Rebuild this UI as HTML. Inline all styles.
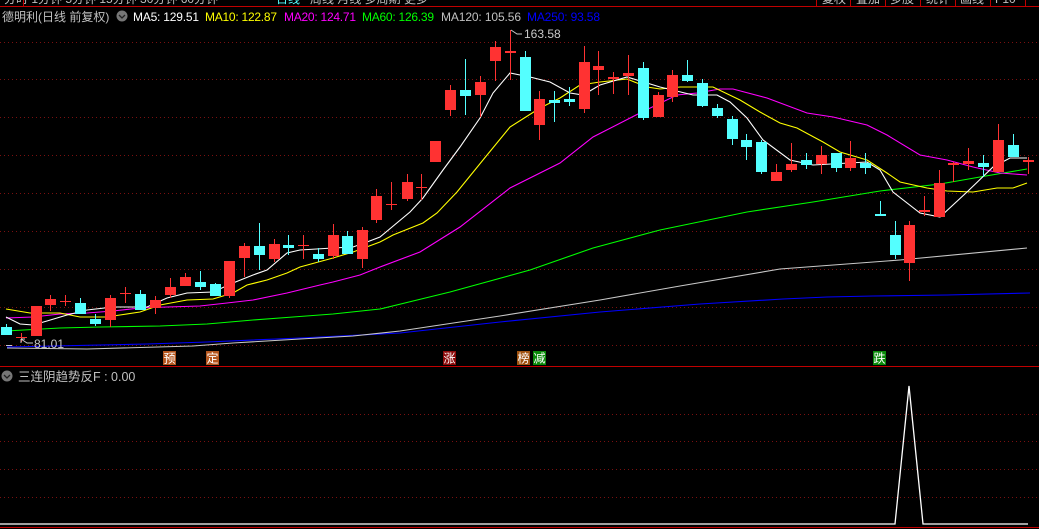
<!DOCTYPE html>
<html><head><meta charset="utf-8"><style>
html,body{margin:0;padding:0;background:#000;width:1039px;height:529px;overflow:hidden}
svg{display:block}
text{font-family:"Liberation Sans","Noto Sans CJK SC",sans-serif}
</style></head><body>
<svg width="1039" height="529" viewBox="0 0 1039 529" xmlns="http://www.w3.org/2000/svg" shape-rendering="crispEdges">
<rect width="1039" height="529" fill="#000"/>
<g fill="#c0c0c0" font-size="12">
<text x="4" y="3">分时 1分钟 5分钟 15分钟 30分钟 60分钟</text>
<text x="276" y="3" fill="#54ffff">日线</text>
<text x="310" y="3">周线 月线 多周期 更多</text>
<text x="822" y="3">复权</text><text x="856" y="3">叠加</text><text x="890" y="3">多股</text><text x="926" y="3">统计</text><text x="960" y="3">画线</text><text x="995" y="3">F10</text>
</g>
<line x1="0" y1="6.5" x2="1039" y2="6.5" stroke="#c00000"/>
<g stroke="#c00000"><line x1="23.5" y1="0" x2="23.5" y2="7"/><line x1="816.5" y1="0" x2="816.5" y2="7"/><line x1="850.5" y1="0" x2="850.5" y2="7"/><line x1="885.5" y1="0" x2="885.5" y2="7"/><line x1="920.5" y1="0" x2="920.5" y2="7"/><line x1="955.5" y1="0" x2="955.5" y2="7"/><line x1="990.5" y1="0" x2="990.5" y2="7"/><line x1="1025.5" y1="0" x2="1025.5" y2="7"/></g>
<g font-size="12">
<text x="2" y="21" fill="#c0c0c0">德明利(日线 前复权)</text>
<circle cx="122" cy="16" r="5.5" fill="#777" shape-rendering="auto"/><path d="M119 15l3 3 3-3" stroke="#222" fill="none" stroke-width="1.3" shape-rendering="auto"/>
<text x="133" y="21" fill="#fff" textLength="66">MA5: 129.51</text>
<text x="205" y="21" fill="#ffff00" textLength="72">MA10: 122.87</text>
<text x="284" y="21" fill="#ff00ff" textLength="72">MA20: 124.71</text>
<text x="362" y="21" fill="#00ff00" textLength="72">MA60: 126.39</text>
<text x="441" y="21" fill="#c0c0c0" textLength="80">MA120: 105.56</text>
<text x="527" y="21" fill="#0000ff" textLength="73">MA250: 93.58</text>
</g>
<g stroke="#7a1010" stroke-dasharray="1 3">
<line x1="0" y1="42.5" x2="1039" y2="42.5"/><line x1="0" y1="79.5" x2="1039" y2="79.5"/><line x1="0" y1="117.5" x2="1039" y2="117.5"/><line x1="0" y1="155.5" x2="1039" y2="155.5"/><line x1="0" y1="193.5" x2="1039" y2="193.5"/><line x1="0" y1="231.5" x2="1039" y2="231.5"/><line x1="0" y1="269.5" x2="1039" y2="269.5"/><line x1="0" y1="307.5" x2="1039" y2="307.5"/><line x1="0" y1="345.5" x2="1039" y2="345.5"/>
<line x1="0" y1="414.5" x2="1039" y2="414.5"/><line x1="0" y1="441.5" x2="1039" y2="441.5"/><line x1="0" y1="469.5" x2="1039" y2="469.5"/><line x1="0" y1="497.5" x2="1039" y2="497.5"/>
</g>
<g fill="none" stroke-width="1.1" shape-rendering="auto">
<polyline stroke="#0000ff" points="7,347 147,344 207,342 300,338 400,333 500,322 600,312 700,304 783,299 827,297 873,296 947,295 1030,293"/>
<polyline stroke="#c8c8c8" points="7,348 87,349 193,346 233,343 300,339 353,336 400,331 500,316 600,300 680,286 780,269 900,260 1027,248"/>
<polyline stroke="#00ff00" points="6,331 60,328 100,327 160,326 207,324 253,320 293,317 333,314 380,309 450,292 530,270 593,248 660,230 747,212 813,202 880,191 940,184 980,177 1027,169"/>
<polyline stroke="#ff00ff" points="6,318 33,317 60,314 87,313 113,311 140,308 167,307 200,306 227,303 253,300 287,293 320,285 333,282 360,275 380,267 420,252 460,227 510,188 560,163 593,137 640,113 677,95 697,93 720,89 733,89 767,98 807,113 833,117 867,125 887,135 920,155 947,160 973,167 1000,173 1027,175"/>
<polyline stroke="#ffff00" points="6,309 30,313 60,313 80,317 107,317 120,315 140,312 160,305 187,300 213,299 233,293 247,285 267,280 287,273 300,267 333,258 353,252 380,242 393,235 423,223 437,213 457,192 483,160 510,127 540,108 560,98 580,85 600,82 627,79 647,87 660,89 680,87 713,87 740,100 760,112 780,123 797,128 823,142 840,152 867,160 887,173 900,182 927,188 947,191 973,192 997,188 1013,188 1027,183"/>
<polyline stroke="#ffffff" points="6,317 20,324 33,325 47,321 67,315 87,310 113,307 147,307 167,298 187,293 213,292 233,283 253,275 267,270 287,253 300,250 333,248 353,247 367,242 380,237 410,212 423,198 443,170 460,147 480,118 493,93 510,73 530,77 550,82 570,93 583,95 600,85 627,77 647,83 660,87 693,95 717,95 730,102 747,118 763,140 790,160 813,165 867,162 880,170 893,192 920,213 940,217 967,192 993,167 1010,158 1027,158"/>
</g>
<g>
<g stroke="#ff3232" fill="#ff3232">
<line x1="21.5" y1="333" x2="21.5" y2="342"/><rect x="16" y="337" width="11" height="1" stroke="none"/>
<rect x="31" y="306" width="11" height="30" stroke="none"/>
<line x1="50.5" y1="295" x2="50.5" y2="311"/><rect x="45" y="299" width="11" height="6" stroke="none"/>
<line x1="65.5" y1="295" x2="65.5" y2="306"/><rect x="60" y="301" width="11" height="1" stroke="none"/>
<line x1="110.5" y1="295" x2="110.5" y2="327"/><rect x="105" y="298" width="11" height="22" stroke="none"/>
<line x1="125.5" y1="287" x2="125.5" y2="303"/><rect x="120" y="293" width="11" height="1" stroke="none"/>
<line x1="155.5" y1="296" x2="155.5" y2="314"/><rect x="150" y="300" width="11" height="8" stroke="none"/>
<line x1="170.5" y1="278" x2="170.5" y2="298"/><rect x="165" y="287" width="11" height="8" stroke="none"/>
<line x1="185.5" y1="273" x2="185.5" y2="286"/><rect x="180" y="277" width="11" height="9" stroke="none"/>
<line x1="229.5" y1="261" x2="229.5" y2="298"/><rect x="224" y="261" width="11" height="35" stroke="none"/>
<line x1="244.5" y1="243" x2="244.5" y2="277"/><rect x="239" y="246" width="11" height="12" stroke="none"/>
<line x1="274.5" y1="239" x2="274.5" y2="262"/><rect x="269" y="244" width="11" height="15" stroke="none"/>
<line x1="303.5" y1="235" x2="303.5" y2="259"/><rect x="298" y="245" width="11" height="1" stroke="none"/>
<line x1="333.5" y1="224" x2="333.5" y2="259"/><rect x="328" y="235" width="11" height="21" stroke="none"/>
<line x1="362.5" y1="227" x2="362.5" y2="268"/><rect x="357" y="230" width="11" height="29" stroke="none"/>
<line x1="376.5" y1="189" x2="376.5" y2="223"/><rect x="371" y="196" width="11" height="24" stroke="none"/>
<line x1="391.5" y1="182" x2="391.5" y2="210"/><rect x="386" y="204" width="11" height="1" stroke="none"/>
<line x1="407.5" y1="174" x2="407.5" y2="201"/><rect x="402" y="182" width="11" height="17" stroke="none"/>
<line x1="421.5" y1="174" x2="421.5" y2="200"/><rect x="416" y="187" width="11" height="1" stroke="none"/>
<rect x="430" y="141" width="11" height="21" stroke="none"/>
<line x1="450.5" y1="85" x2="450.5" y2="116"/><rect x="445" y="90" width="11" height="20" stroke="none"/>
<line x1="480.5" y1="76" x2="480.5" y2="117"/><rect x="475" y="82" width="11" height="13" stroke="none"/>
<line x1="495.5" y1="41" x2="495.5" y2="81"/><rect x="490" y="47" width="11" height="14" stroke="none"/>
<line x1="510.5" y1="30" x2="510.5" y2="80"/><rect x="505" y="51" width="11" height="2" stroke="none"/>
<line x1="539.5" y1="91" x2="539.5" y2="140"/><rect x="534" y="99" width="11" height="26" stroke="none"/>
<line x1="584.5" y1="46" x2="584.5" y2="113"/><rect x="579" y="62" width="11" height="47" stroke="none"/>
<line x1="598.5" y1="51" x2="598.5" y2="95"/><rect x="593" y="66" width="11" height="4" stroke="none"/>
<line x1="613.5" y1="72" x2="613.5" y2="94"/><rect x="608" y="77" width="11" height="2" stroke="none"/>
<line x1="628.5" y1="55" x2="628.5" y2="95"/><rect x="623" y="73" width="11" height="3" stroke="none"/>
<line x1="658.5" y1="92" x2="658.5" y2="117"/><rect x="653" y="95" width="11" height="22" stroke="none"/>
<line x1="672.5" y1="70" x2="672.5" y2="102"/><rect x="667" y="75" width="11" height="22" stroke="none"/>
<line x1="776.5" y1="164" x2="776.5" y2="181"/><rect x="771" y="172" width="11" height="9" stroke="none"/>
<line x1="791.5" y1="143" x2="791.5" y2="172"/><rect x="786" y="164" width="11" height="6" stroke="none"/>
<line x1="821.5" y1="146" x2="821.5" y2="174"/><rect x="816" y="155" width="11" height="9" stroke="none"/>
<line x1="850.5" y1="141" x2="850.5" y2="171"/><rect x="845" y="158" width="11" height="10" stroke="none"/>
<line x1="909.5" y1="221" x2="909.5" y2="281"/><rect x="904" y="225" width="11" height="38" stroke="none"/>
<line x1="924.5" y1="196" x2="924.5" y2="216"/><rect x="919" y="210" width="11" height="2" stroke="none"/>
<line x1="939.5" y1="170" x2="939.5" y2="217"/><rect x="934" y="183" width="11" height="34" stroke="none"/>
<line x1="953.5" y1="162" x2="953.5" y2="182"/><rect x="948" y="163" width="11" height="2" stroke="none"/>
<line x1="968.5" y1="148" x2="968.5" y2="170"/><rect x="963" y="161" width="11" height="3" stroke="none"/>
<line x1="998.5" y1="124" x2="998.5" y2="172"/><rect x="993" y="140" width="11" height="32" stroke="none"/>
<line x1="1028.5" y1="157" x2="1028.5" y2="174"/><rect x="1023" y="160" width="11" height="2" stroke="none"/>
</g>
<g stroke="#54ffff" fill="#54ffff">
<line x1="6.5" y1="324" x2="6.5" y2="335"/><rect x="1" y="327" width="11" height="8" stroke="none"/>
<line x1="80.5" y1="298" x2="80.5" y2="314"/><rect x="75" y="303" width="11" height="11" stroke="none"/>
<line x1="95.5" y1="314" x2="95.5" y2="326"/><rect x="90" y="319" width="11" height="5" stroke="none"/>
<line x1="140.5" y1="290" x2="140.5" y2="310"/><rect x="135" y="294" width="11" height="16" stroke="none"/>
<line x1="200.5" y1="271" x2="200.5" y2="290"/><rect x="195" y="282" width="11" height="5" stroke="none"/>
<line x1="215.5" y1="283" x2="215.5" y2="296"/><rect x="210" y="284" width="11" height="12" stroke="none"/>
<line x1="259.5" y1="223" x2="259.5" y2="270"/><rect x="254" y="246" width="11" height="9" stroke="none"/>
<line x1="288.5" y1="235" x2="288.5" y2="255"/><rect x="283" y="245" width="11" height="3" stroke="none"/>
<line x1="318.5" y1="248" x2="318.5" y2="262"/><rect x="313" y="254" width="11" height="5" stroke="none"/>
<line x1="347.5" y1="231" x2="347.5" y2="254"/><rect x="342" y="236" width="11" height="18" stroke="none"/>
<line x1="465.5" y1="59" x2="465.5" y2="115"/><rect x="460" y="90" width="11" height="6" stroke="none"/>
<line x1="525.5" y1="51" x2="525.5" y2="111"/><rect x="520" y="57" width="11" height="54" stroke="none"/>
<line x1="554.5" y1="91" x2="554.5" y2="122"/><rect x="549" y="100" width="11" height="3" stroke="none"/>
<line x1="569.5" y1="87" x2="569.5" y2="106"/><rect x="564" y="99" width="11" height="3" stroke="none"/>
<line x1="643.5" y1="62" x2="643.5" y2="120"/><rect x="638" y="68" width="11" height="50" stroke="none"/>
<line x1="687.5" y1="60" x2="687.5" y2="82"/><rect x="682" y="75" width="11" height="6" stroke="none"/>
<line x1="702.5" y1="79" x2="702.5" y2="107"/><rect x="697" y="83" width="11" height="23" stroke="none"/>
<line x1="717.5" y1="104" x2="717.5" y2="118"/><rect x="712" y="108" width="11" height="8" stroke="none"/>
<line x1="732.5" y1="116" x2="732.5" y2="145"/><rect x="727" y="119" width="11" height="20" stroke="none"/>
<line x1="746.5" y1="134" x2="746.5" y2="160"/><rect x="741" y="140" width="11" height="7" stroke="none"/>
<line x1="761.5" y1="140" x2="761.5" y2="174"/><rect x="756" y="142" width="11" height="30" stroke="none"/>
<line x1="806.5" y1="153" x2="806.5" y2="169"/><rect x="801" y="160" width="11" height="5" stroke="none"/>
<line x1="836.5" y1="153" x2="836.5" y2="172"/><rect x="831" y="153" width="11" height="15" stroke="none"/>
<line x1="865.5" y1="153" x2="865.5" y2="174"/><rect x="860" y="163" width="11" height="5" stroke="none"/>
<line x1="880.5" y1="201" x2="880.5" y2="215"/><rect x="875" y="214" width="11" height="2" stroke="none"/>
<line x1="895.5" y1="221" x2="895.5" y2="259"/><rect x="890" y="235" width="11" height="20" stroke="none"/>
<line x1="983.5" y1="155" x2="983.5" y2="177"/><rect x="978" y="163" width="11" height="4" stroke="none"/>
<line x1="1013.5" y1="134" x2="1013.5" y2="157"/><rect x="1008" y="145" width="11" height="12" stroke="none"/>
</g>
</g>
<g fill="#c8c8c8" font-size="12" shape-rendering="auto">
<path d="M511 30 L517 34 L522 34" stroke="#c8c8c8" fill="none"/>
<text x="524" y="38">163.58</text>
<path d="M21 339 L27 343 L33 343 M21 339 L25 339 M21 339 L21 343" stroke="#c8c8c8" fill="none"/>
<text x="34" y="348">81.01</text>
<line x1="6" y1="345.5" x2="12" y2="345.5" stroke="#c8c8c8"/>
</g>
<g font-size="12" fill="#fff">
<rect x="163" y="351" width="13" height="14" fill="#b4561e"/><text x="163.5" y="362.5" style="font-family:'Noto Sans CJK SC',sans-serif">预</text>
<rect x="206" y="351" width="13" height="14" fill="#b4561e"/><text x="206.5" y="362.5" style="font-family:'Noto Sans CJK SC',sans-serif">定</text>
<rect x="443" y="351" width="13" height="14" fill="#8b0a0a"/><text x="443.5" y="362.5" style="font-family:'Noto Sans CJK SC',sans-serif">涨</text>
<rect x="517" y="351" width="13" height="14" fill="#a0520f"/><text x="517.5" y="362.5" style="font-family:'Noto Sans CJK SC',sans-serif">榜</text>
<rect x="533" y="351" width="13" height="14" fill="#0a8a0a"/><text x="533.5" y="362.5" style="font-family:'Noto Sans CJK SC',sans-serif">减</text>
<rect x="873" y="351" width="13" height="14" fill="#0a8a0a"/><text x="873.5" y="362.5" style="font-family:'Noto Sans CJK SC',sans-serif">跌</text>
</g>
<line x1="0" y1="366.5" x2="1039" y2="366.5" stroke="#c00000"/>
<circle cx="7" cy="376" r="5.5" fill="#777" shape-rendering="auto"/><path d="M4 375l3 3 3-3" stroke="#222" fill="none" stroke-width="1.3" shape-rendering="auto"/>
<text x="18" y="381" font-size="12.5" fill="#c0c0c0">三连阴趋势反F : 0.00</text>
<polyline points="0,524 895,524 909,386 923,524 1028,524" fill="none" stroke="#fff" stroke-width="1.3" shape-rendering="auto"/>
<line x1="0" y1="527.5" x2="1039" y2="527.5" stroke="#c00000"/>
</svg>
</body></html>
